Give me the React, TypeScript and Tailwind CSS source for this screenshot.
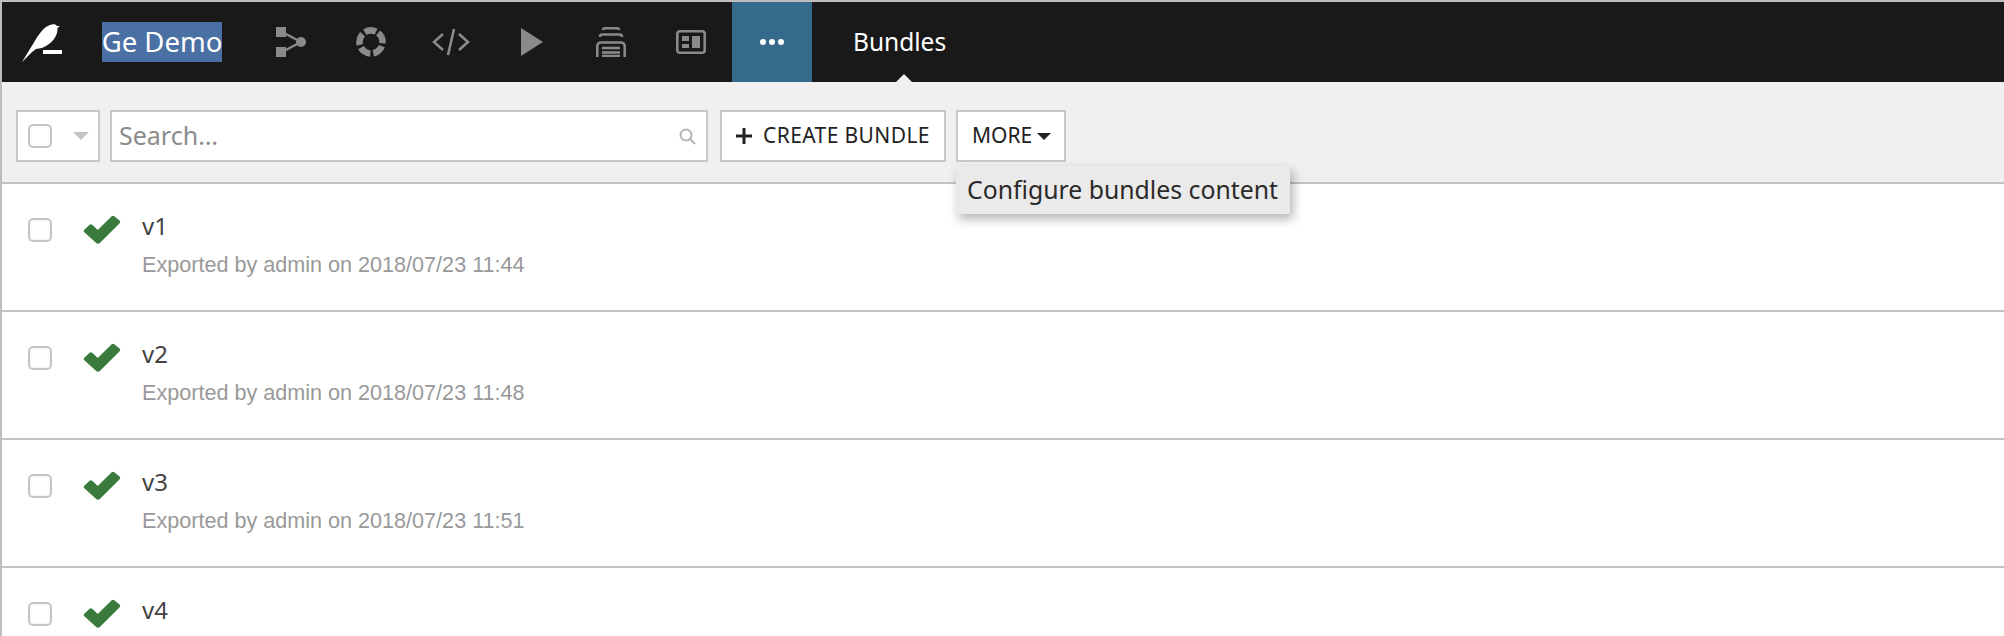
import React from "react";

const ui = "font-['Noto_Sans',sans-serif]";

function Bird() {
  return (
    <svg width="42" height="42" viewBox="0 0 42 42" fill="#fff">
      <path d="M0 41 L11 23 C16 15 20 7 28 4 C31 2.5 34 3 35 5 L38 5 L35.5 7 C36 15 30 23 20 27 L14 28 L10 31 Z" />
      <rect x="21" y="29" width="19" height="4" />
    </svg>
  );
}

const icons = [
  <svg key="a" width="32" height="32" viewBox="0 0 32 32" fill="#8a8a8a">
    <rect x="1" y="1" width="10" height="10" /><rect x="1" y="21" width="10" height="10" />
    <circle cx="26" cy="16" r="5" />
    <path d="M9 7 L26 16 L9 25" fill="none" stroke="#8a8a8a" strokeWidth="2.4" />
  </svg>,
  <svg key="b" width="32" height="32" viewBox="0 0 32 32" fill="none" stroke="#8a8a8a" strokeWidth="6.5">
    <circle cx="16" cy="16" r="11.5" strokeDasharray="11.6 2.85" transform="rotate(-52 16 16)" />
  </svg>,
  <svg key="c" width="38" height="28" viewBox="0 0 38 28" fill="none" stroke="#8a8a8a" strokeWidth="2.6">
    <path d="M11 6 L2 14 L11 22" /><path d="M27 6 L36 14 L27 22" /><path d="M22 1 L16 27" />
  </svg>,
  <svg key="d" width="24" height="30" viewBox="0 0 24 30" fill="#8a8a8a">
    <path d="M2 1 L24 15 L2 29Z" />
  </svg>,
  <svg key="e" width="30" height="30" viewBox="0 0 30 30" fill="none" stroke="#8a8a8a" strokeWidth="2.6">
    <path d="M7 3 C7 1.5 8 1.3 9 1.3 L21 1.3 C22 1.3 23 1.5 23 3" />
    <path d="M4 10 C4 8.5 5 7.5 6 7.5 L24 7.5 C25 7.5 26 8.5 26 10" />
    <path d="M1.3 30 L1.3 19 C1.3 17 3 15.5 5 15.5 L25 15.5 C27 15.5 28.7 17 28.7 19 L28.7 30" />
    <path d="M6 21 L24 21" /><path d="M6 25.5 L24 25.5" /><path d="M6 29 L24 29" />
  </svg>,
  <svg key="f" width="30" height="24" viewBox="0 0 30 24" fill="#8a8a8a">
    <rect x="1.3" y="1.3" width="27.4" height="21.4" rx="2.5" fill="none" stroke="#8a8a8a" strokeWidth="2.6" />
    <rect x="6" y="6" width="7" height="5" /><rect x="6" y="14" width="7" height="4" /><rect x="16" y="6" width="8" height="12" />
  </svg>,
];

function Box() {
  return <span className="block h-[24px] w-[24px] rounded-[5px] border-2 border-[#c4c6c6] bg-white shadow-[inset_0_0_2px_#ddd]" />;
}

function Row({ name, time }: { name: string; time?: string }) {
  return (
    <div className="flex h-[128px] items-start border-t-2 border-[#c2c2c2] bg-white pl-[26px]">
      <div className="mt-[34px]"><Box /></div>
      <svg className="ml-[31px] mt-[31px]" width="38" height="30" viewBox="0 0 36 30" fill="#3a7a3c" preserveAspectRatio="none">
        <path d="M1 15 L6 10 C7 9 8 9 9 10 L14 15 L27 1.5 C28 0.5 29 0.5 30 1.5 L34.5 5.5 C35.5 6.5 35.5 7.5 34.5 8.5 L16 28 C15 29 13.5 29 12.5 28 L1 17 C0.5 16.5 0.5 15.5 1 15Z" />
      </svg>
      <div className="ml-[21px] mt-[26px]">
        <div className={`${ui} text-[24px] leading-[32px] text-[#444]`}>{name}</div>
        {time && (
          <div className="mt-[11px] font-['Liberation_Sans',sans-serif] text-[21.6px] leading-[24px] text-[#999]">
            Exported by admin on 2018/07/23 {time}
          </div>
        )}
      </div>
    </div>
  );
}

export default function App() {
  return (
    <div className={`relative h-[636px] w-[2004px] overflow-hidden border-l-2 border-t-2 border-[#bdbdbd] bg-white ${ui}`}>
      <header className="flex h-[80px] items-center bg-[#191919]">
        <div className="ml-[20px] w-[80px] shrink-0"><Bird /></div>
        <span className="flex h-[40px] w-[120px] items-center justify-center whitespace-nowrap bg-[#4a70a4] text-[27.5px] text-white">Ge Demo</span>
        <nav className="ml-[29px] flex h-full items-center">
          {icons.map((ic, i) => (
            <div key={i} className="flex h-full w-[80px] items-center justify-center">{ic}</div>
          ))}
        </nav>
        <div className="ml-px flex h-full w-[80px] items-center justify-center gap-[3px] bg-[#366a8c]">
          <span className="h-[6px] w-[6px] rounded-full bg-white" />
          <span className="h-[6px] w-[6px] rounded-full bg-white" />
          <span className="h-[6px] w-[6px] rounded-full bg-white" />
        </div>
        <div className="relative ml-[41px] flex h-full w-[93px] items-center text-[24.5px] text-white">
          Bundles
          <span className="absolute bottom-0 left-[43px] h-0 w-0 border-x-[8px] border-b-[8px] border-x-transparent border-b-[#f0f0f0]" />
        </div>
      </header>

      <div className="flex h-[100px] items-start gap-[10px] bg-[#f0f0f0] pl-[14px] pt-[28px]">
        <div className="flex h-[52px] w-[84px] items-center border-2 border-[#c4c9c8] bg-white pl-[10px]">
          <Box />
          <span className="ml-[21px] h-0 w-0 border-x-[8px] border-t-[8px] border-x-transparent border-t-[#c4c4c4]" />
        </div>
        <div className="flex h-[52px] w-[598px] items-center justify-between border-2 border-[#c4c9c8] bg-white pl-[7px] pr-[10px]">
          <span className="text-[25px] text-[#8c8c8c]">Search…</span>
          <svg width="17" height="17" viewBox="0 0 17 17" fill="none" stroke="#b5b5b5" strokeWidth="2">
            <circle cx="7" cy="7" r="5.5" /><path d="M11 11 L16 16" />
          </svg>
        </div>
        <div className="ml-[2px] flex h-[52px] w-[226px] items-center gap-[11px] border-2 border-[#c4c9c8] bg-white pl-[14px] text-[21px] tracking-[0.4px] text-[#222]">
          <svg width="16" height="16" viewBox="0 0 16 16" fill="#222"><path d="M6.5 0h3v6.5H16v3H9.5V16h-3V9.5H0v-3h6.5z" /></svg>
          <span>CREATE BUNDLE</span>
        </div>
        <div className="flex h-[52px] w-[110px] items-center gap-[5px] border-2 border-[#c4c9c8] bg-white pl-[14px] text-[21px] text-[#222]">
          <span>MORE</span>
          <span className="h-0 w-0 border-x-[7px] border-t-[7px] border-x-transparent border-t-[#222]" />
        </div>
      </div>

      <Row name="v1" time="11:44" />
      <Row name="v2" time="11:48" />
      <Row name="v3" time="11:51" />
      <Row name="v4" />

      <div className="absolute left-[954px] top-[164px] flex h-[48px] w-[334px] items-center bg-[#eaeaea] pl-[11px] text-[24.8px] text-[#2a2a2a] shadow-[3px_5px_10px_rgba(0,0,0,0.3)]">
        Configure bundles content
      </div>
    </div>
  );
}
